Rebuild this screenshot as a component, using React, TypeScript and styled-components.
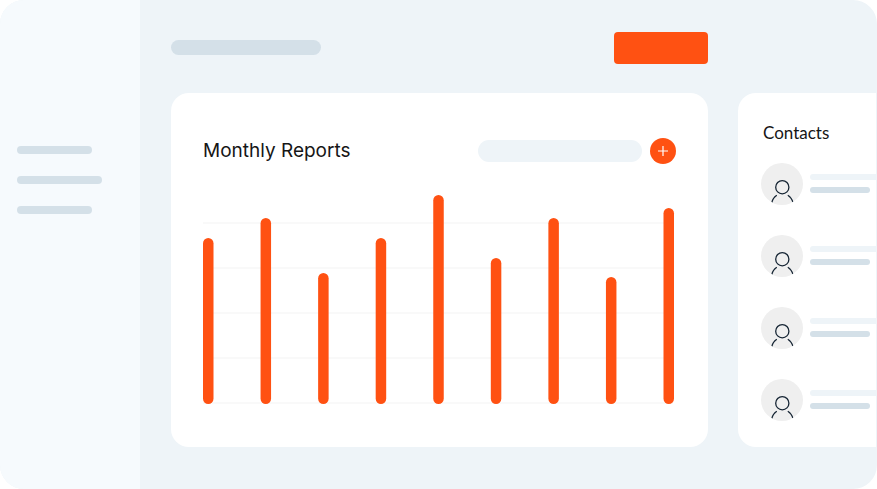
import React from "react";
import styled, { createGlobalStyle } from "styled-components";

const color = {
  page: "#ffffff",
  canvas: "#eef4f8",
  sidebar: "#f6fafd",
  line: "#d4e0e8",
  accent: "#ff5112",
  text: "#161616",
  avatar: "#efefef",
  ink: "#162534",
  grid: "#f9f9f9",
};

const GlobalStyle = createGlobalStyle`
  *, *::before, *::after { box-sizing: border-box; }
  body { margin: 0; background: ${color.page}; font-family: Inter, "Liberation Sans", sans-serif; color: ${color.text}; }
  h2, ul { margin: 0; padding: 0; }
  ul { list-style: none; }
`;

const Shell = styled.div`
  display: flex;
  min-height: 100vh;
  border-radius: 24px;
  overflow: hidden;
  background: ${color.canvas};
`;

const Sidebar = styled.nav`
  flex: 0 0 140px;
  display: flex;
  flex-direction: column;
  gap: 22px;
  padding: 146px 17px 0;
  background: ${color.sidebar};
`;

const NavLink = styled.a<{ $width: number }>`
  width: ${(p) => p.$width}px;
  height: 8px;
  border-radius: 4px;
  background: ${color.line};
`;

const Content = styled.main`
  flex: 1;
  min-width: 0;
  display: grid;
  grid-template-columns: minmax(0, 1fr) 138px;
  grid-template-rows: auto auto;
  align-content: start;
  gap: 29px 30px;
  padding: 32px 1px 42px 31px;
`;

const TopBar = styled.header`
  display: flex;
  align-items: flex-start;
  justify-content: space-between;
`;

const TitleBar = styled.div`
  width: 150px;
  height: 15px;
  margin-top: 8px;
  border-radius: 8px;
  background: ${color.line};
`;

const ActionButton = styled.button`
  width: 94px;
  height: 32px;
  border: 0;
  border-radius: 4px;
  background: ${color.accent};
  cursor: pointer;
`;

const ReportCard = styled.section`
  grid-column: 1;
  padding: 45px 32px 43px;
  border-radius: 18px;
  background: #fff;
`;

const ReportHeader = styled.div`
  display: flex;
  align-items: center;
  gap: 8px;
  height: 26px;
  margin-bottom: 31px;
`;

const ReportTitle = styled.h2`
  flex: 1;
  font-size: 19px;
  line-height: 26px;
  font-weight: 400;
  white-space: nowrap;
`;

const SearchInput = styled.input`
  width: 164px;
  height: 22px;
  padding: 0 12px;
  border: 0;
  border-radius: 11px;
  background: ${color.canvas};
  font: inherit;
  font-size: 12px;
`;

const AddButton = styled.button`
  display: grid;
  place-items: center;
  width: 26px;
  height: 26px;
  padding: 0;
  border: 0;
  border-radius: 50%;
  background: ${color.accent};
  cursor: pointer;
`;

const ChartSvg = styled.svg`
  display: block;
  width: 100%;
  height: auto;
`;

const ContactsCard = styled.section`
  grid-column: 2;
  padding: 30px 0 26px 23px;
  border-radius: 18px 0 0 18px;
  background: #fff;
`;

const ContactsTitle = styled.h2`
  padding-left: 2px;
  margin-bottom: 20px;
  font-family: Lato, "Liberation Sans", sans-serif;
  font-size: 17px;
  line-height: 20px;
  font-weight: 400;
`;

const ContactList = styled.ul`
  display: grid;
  gap: 30px;
`;

const ContactRow = styled.li`
  display: flex;
  gap: 7px;
`;

const Avatar = styled.svg`
  flex: none;
  display: block;
  width: 42px;
  height: 42px;
  border-radius: 50%;
  background: ${color.avatar};
`;

const ContactLines = styled.div`
  flex: 1;
  display: flex;
  flex-direction: column;
  gap: 7px;
  padding-top: 11px;
`;

const NameLine = styled.div`
  height: 6px;
  border-radius: 3px 0 0 3px;
  background: ${color.canvas};
`;

const DetailLine = styled.div`
  width: 60px;
  height: 6px;
  border-radius: 3px;
  background: ${color.line};
`;

const navItems = [
  { label: "Overview", width: 75 },
  { label: "Reports", width: 85 },
  { label: "Settings", width: 75 },
];

const monthlyValues = [166, 186, 131, 166, 209, 146, 186, 127, 196];
const gridLevels = [28, 73, 118, 163, 208];
const contacts = ["first", "second", "third", "fourth"];

const chart = { width: 473, height: 209, plot: 471, bar: 10.5 };

function ReportChart() {
  const step = (chart.plot - chart.bar) / (monthlyValues.length - 1);
  return (
    <ChartSvg viewBox={`0 0 ${chart.width} ${chart.height}`} role="img" aria-label="Monthly reports">
      {gridLevels.map((y) => (
        <rect key={y} x={0} y={y - 1} width={470} height={2} fill={color.grid} />
      ))}
      {monthlyValues.map((value, i) => (
        <rect
          key={i}
          x={i * step}
          y={chart.height - value}
          width={chart.bar}
          height={value}
          rx={chart.bar / 2}
          fill={color.accent}
        />
      ))}
    </ChartSvg>
  );
}

function PersonAvatar() {
  return (
    <Avatar viewBox="0 0 42 42" fill="none" stroke={color.ink} strokeWidth="1.3" aria-hidden="true">
      <circle cx="21.3" cy="24.2" r="6.6" />
      <path d="M15.8 32.2C13.2 33.9 11.4 36.4 10.8 39.6" />
      <path d="M26.8 32.2C29.4 33.9 31.3 36.4 32 39.6" />
    </Avatar>
  );
}

export default function App() {
  return (
    <>
      <GlobalStyle />
      <Shell>
        <Sidebar aria-label="Main">
          {navItems.map((item) => (
            <NavLink key={item.label} href="#" aria-label={item.label} $width={item.width} />
          ))}
        </Sidebar>
        <Content>
          <TopBar>
            <TitleBar />
            <ActionButton type="button" aria-label="Create report" />
          </TopBar>
          <ReportCard>
            <ReportHeader>
              <ReportTitle>Monthly Reports</ReportTitle>
              <SearchInput type="text" aria-label="Search reports" />
              <AddButton type="button" aria-label="Add">
                <svg width="10" height="10" viewBox="0 0 10 10" stroke="#fff" strokeWidth="1.2" aria-hidden="true">
                  <path d="M5 0V10M0 5H10" />
                </svg>
              </AddButton>
            </ReportHeader>
            <ReportChart />
          </ReportCard>
          <ContactsCard>
            <ContactsTitle>Contacts</ContactsTitle>
            <ContactList>
              {contacts.map((id) => (
                <ContactRow key={id}>
                  <PersonAvatar />
                  <ContactLines>
                    <NameLine />
                    <DetailLine />
                  </ContactLines>
                </ContactRow>
              ))}
            </ContactList>
          </ContactsCard>
        </Content>
      </Shell>
    </>
  );
}
